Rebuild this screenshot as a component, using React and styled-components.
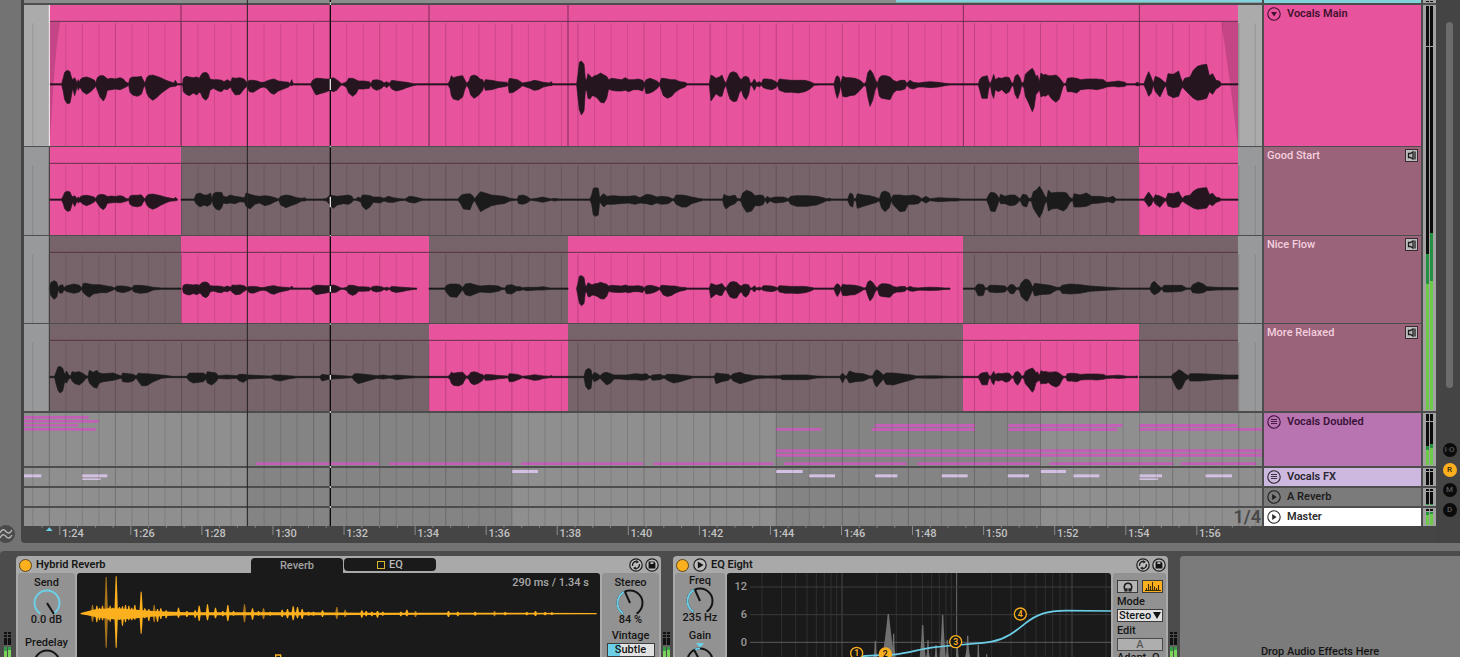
import styled, { createGlobalStyle } from "styled-components";

const PINK = "#e8539e";
const MUTED = "#77646a";
const CYAN = "#6ccfe8";
const AMBER = "#fdb01e";

// Timeline drawings use three units per pixel, samples are [x, up, down]
const LEFT = 72;
const WIDTH = 3714;
const GRID_START = 148;
const BAR = 49.56;

const COMP = [
  [148, 1, 1], [185, 2, 2], [190, 20, 22], [194, 36, 46], [202, 42, 58], [210, 38, 56], [214, 22, 35], [218, 14, 12],
  [224, 20, 34], [228, 12, 20], [231, 4, 6], [235, 14, 18], [238, 6, 10], [242, 16, 12], [248, 20, 22], [260, 22, 30],
  [272, 18, 22], [284, 12, 10], [287, 3, 4], [292, 20, 18], [300, 26, 38], [310, 26, 50], [316, 22, 40], [322, 16, 18],
  [335, 18, 16], [345, 16, 14], [360, 20, 16], [370, 16, 12], [378, 6, 8], [386, 3, 3], [390, 18, 24], [398, 22, 32],
  [412, 22, 36], [424, 24, 30], [430, 12, 12], [435, 3, 3], [440, 20, 26], [446, 26, 38], [458, 28, 48], [470, 24, 40],
  [482, 20, 28], [498, 12, 16], [510, 8, 8], [522, 4, 6], [526, 12, 6], [532, 1, 1], [548, 1, 1], [550, 18, 22],
  [558, 24, 30], [568, 22, 34], [580, 20, 26], [590, 22, 32], [598, 18, 24], [602, 26, 26], [608, 34, 40], [618, 36, 48],
  [625, 30, 38], [630, 16, 18], [640, 14, 12], [655, 14, 20], [665, 12, 22], [672, 8, 14], [682, 14, 16], [692, 8, 8],
  [697, 20, 20], [706, 18, 32], [720, 20, 30], [732, 16, 14], [740, 6, 6], [748, 12, 22], [760, 12, 24], [772, 10, 16],
  [782, 6, 10], [792, 6, 8], [800, 10, 12], [812, 14, 26], [822, 16, 30], [835, 10, 20], [850, 8, 14], [866, 6, 8],
  [870, 1, 1], [875, 14, 4], [880, 1, 1], [932, 1, 1], [938, 12, 14], [948, 18, 32], [960, 18, 28], [975, 16, 24],
  [990, 16, 18], [1000, 20, 22], [1010, 14, 18], [1018, 8, 8], [1024, 1, 1], [1032, 4, 4], [1040, 8, 10], [1046, 18, 26],
  [1058, 18, 36], [1068, 14, 28], [1075, 10, 14], [1090, 10, 14], [1108, 8, 12], [1112, 2, 2], [1118, 12, 12],
  [1130, 14, 18], [1145, 10, 12], [1152, 4, 4], [1160, 8, 10], [1168, 3, 3], [1175, 12, 14], [1188, 10, 20],
  [1205, 8, 16], [1220, 6, 10], [1240, 2, 4], [1250, 1, 1], [1344, 1, 1], [1350, 12, 12], [1354, 26, 34], [1360, 20, 44],
  [1375, 24, 48], [1388, 26, 38], [1394, 14, 16], [1400, 3, 3], [1407, 10, 14], [1412, 24, 32], [1422, 28, 42],
  [1432, 24, 36], [1440, 16, 28], [1448, 14, 18], [1452, 4, 4], [1456, 14, 18], [1475, 12, 16], [1495, 8, 10],
  [1520, 6, 6], [1524, 2, 2], [1528, 18, 26], [1540, 16, 24], [1552, 14, 16], [1568, 4, 4], [1578, 6, 8], [1590, 8, 12],
  [1602, 12, 18], [1615, 10, 16], [1630, 6, 8], [1648, 4, 4], [1654, 8, 4], [1658, 1, 1], [1730, 1, 1], [1734, 30, 40],
  [1738, 66, 76], [1744, 70, 92], [1752, 60, 80], [1756, 16, 20], [1760, 14, 18], [1764, 32, 42], [1770, 26, 44],
  [1776, 20, 34], [1784, 26, 36], [1792, 28, 42], [1802, 34, 54], [1812, 28, 56], [1820, 24, 42], [1826, 14, 14],
  [1835, 18, 18], [1850, 16, 20], [1865, 14, 20], [1876, 20, 18], [1886, 14, 22], [1900, 14, 16], [1915, 16, 16],
  [1928, 12, 20], [1933, 3, 4], [1938, 14, 28], [1950, 18, 26], [1962, 14, 20], [1974, 8, 10], [1978, 2, 2],
  [1984, 18, 16], [1990, 18, 34], [2002, 16, 42], [2015, 14, 36], [2025, 14, 24], [2040, 8, 14], [2055, 6, 8],
  [2062, 2, 2], [2080, 1, 1], [2128, 1, 1], [2133, 28, 50], [2140, 24, 40], [2148, 18, 28], [2158, 22, 36], [2166, 28, 36],
  [2172, 12, 14], [2178, 3, 3], [2184, 20, 26], [2190, 34, 44], [2200, 38, 52], [2210, 34, 50], [2218, 20, 26],
  [2224, 14, 16], [2230, 22, 36], [2238, 24, 46], [2246, 20, 30], [2251, 4, 4], [2256, 4, 4], [2263, 16, 18],
  [2270, 4, 4], [2278, 8, 8], [2284, 3, 3], [2290, 16, 10], [2302, 16, 14], [2316, 14, 16], [2328, 8, 10], [2332, 3, 3],
  [2338, 16, 18], [2355, 14, 24], [2375, 12, 24], [2395, 12, 26], [2415, 12, 22], [2430, 8, 14], [2443, 2, 3],
  [2460, 1, 1], [2502, 1, 1], [2508, 22, 30], [2512, 26, 42], [2518, 20, 24], [2522, 2, 3], [2528, 24, 36],
  [2538, 20, 38], [2550, 20, 34], [2565, 18, 32], [2580, 12, 18], [2592, 2, 4], [2598, 6, 6], [2603, 34, 36],
  [2610, 44, 66], [2618, 34, 48], [2625, 16, 18], [2632, 3, 3], [2638, 20, 36], [2645, 26, 42], [2658, 26, 44],
  [2670, 22, 46], [2680, 12, 26], [2690, 8, 18], [2702, 12, 18], [2715, 12, 14], [2720, 3, 3], [2730, 12, 12],
  [2740, 6, 14], [2755, 4, 8], [2770, 6, 8], [2790, 8, 10], [2815, 6, 8], [2835, 3, 4], [2850, 1, 1], [2935, 2, 2],
  [2940, 16, 20], [2946, 22, 42], [2962, 26, 42], [2966, 10, 14], [2971, 2, 2], [2976, 14, 30], [2981, 30, 42],
  [2986, 14, 16], [2995, 20, 22], [3005, 18, 16], [3018, 22, 28], [3028, 20, 22], [3035, 4, 6], [3040, 4, 4],
  [3045, 24, 30], [3053, 30, 44], [3060, 20, 26], [3065, 3, 3], [3072, 8, 10], [3076, 30, 36], [3086, 40, 56],
  [3097, 48, 82], [3102, 40, 70], [3108, 22, 30], [3112, 28, 26], [3118, 8, 16], [3123, 34, 38], [3130, 28, 34],
  [3136, 30, 36], [3145, 26, 30], [3155, 26, 44], [3168, 28, 54], [3178, 20, 44], [3188, 6, 10], [3192, 2, 2],
  [3198, 3, 3], [3202, 18, 22], [3215, 20, 22], [3230, 18, 26], [3242, 14, 16], [3260, 16, 14], [3275, 16, 14],
  [3290, 16, 16], [3310, 14, 12], [3320, 6, 8], [3340, 8, 6], [3355, 10, 8], [3375, 6, 6], [3380, 1, 1], [3405, 1, 1],
  [3412, 6, 5], [3420, 1, 1], [3432, 2, 2], [3440, 24, 20], [3446, 38, 36], [3454, 20, 26], [3460, 3, 3], [3466, 24, 22],
  [3480, 18, 38], [3492, 8, 12], [3498, 4, 4], [3504, 32, 32], [3520, 30, 40], [3536, 40, 36], [3542, 20, 18],
  [3548, 6, 8], [3554, 18, 16], [3570, 22, 32], [3580, 42, 42], [3592, 54, 48], [3605, 58, 46], [3620, 60, 42],
  [3628, 26, 22], [3638, 32, 30], [3648, 12, 14], [3658, 10, 8], [3664, 2, 2], [3670, 1, 1], [3714, 1, 1],
];

const GOOD_START = [
  [543, 1, 1], [583, 1, 1], [588, 16, 12], [600, 20, 22], [612, 14, 16], [622, 14, 20], [632, 20, 14], [636, 2, 2],
  [640, 18, 18], [648, 22, 28], [658, 22, 32], [665, 22, 24], [670, 10, 10], [680, 8, 12], [690, 14, 10], [705, 10, 12],
  [720, 8, 6], [734, 6, 8], [738, 20, 20], [750, 16, 28], [765, 12, 14], [778, 10, 10], [795, 12, 18], [810, 10, 14],
  [825, 6, 6], [836, 2, 2], [842, 10, 16], [858, 14, 24], [872, 12, 18], [890, 6, 12], [905, 4, 4], [914, 6, 4],
  [920, 1, 1], [968, 1, 1], [980, 4, 4], [990, 14, 16], [1000, 12, 26], [1012, 10, 16], [1030, 12, 12], [1045, 14, 14],
  [1056, 10, 8], [1060, 2, 2], [1068, 2, 2], [1074, 8, 4], [1082, 4, 6], [1087, 14, 20], [1098, 14, 30], [1110, 12, 22],
  [1120, 8, 8], [1140, 8, 10], [1152, 4, 4], [1165, 10, 8], [1180, 6, 8], [1200, 3, 3], [1215, 2, 2], [1228, 10, 8],
  [1245, 8, 10], [1260, 4, 4], [1270, 2, 2], [1290, 1, 1], [1374, 1, 1], [1382, 12, 12], [1390, 16, 28], [1410, 18, 30],
  [1418, 12, 10], [1424, 3, 3], [1436, 18, 26], [1442, 24, 36], [1455, 20, 28], [1475, 14, 18], [1495, 12, 14],
  [1512, 10, 12], [1530, 4, 4], [1545, 2, 2], [1552, 2, 2], [1556, 12, 12], [1568, 14, 14], [1580, 10, 10], [1592, 2, 2],
  [1610, 4, 4], [1628, 8, 8], [1645, 4, 4], [1655, 2, 2], [1662, 4, 4], [1680, 1, 1], [1770, 1, 1], [1775, 14, 14],
  [1780, 34, 46], [1786, 36, 50], [1795, 34, 46], [1799, 6, 6], [1806, 14, 16], [1812, 18, 22], [1820, 10, 14],
  [1840, 12, 14], [1860, 10, 12], [1885, 10, 10], [1905, 12, 14], [1920, 6, 10], [1940, 16, 12], [1955, 14, 16],
  [1970, 8, 10], [1985, 10, 14], [2005, 8, 12], [2017, 3, 3], [2022, 3, 3], [2028, 14, 14], [2045, 14, 22],
  [2060, 12, 22], [2075, 8, 12], [2095, 4, 6], [2110, 2, 2], [2125, 1, 1], [2168, 1, 1], [2172, 16, 18], [2178, 12, 28],
  [2190, 10, 18], [2205, 14, 12], [2212, 3, 3], [2222, 3, 3], [2228, 20, 20], [2240, 28, 38], [2255, 22, 34],
  [2265, 12, 18], [2280, 14, 18], [2290, 12, 14], [2295, 2, 2], [2302, 10, 12], [2310, 4, 4], [2325, 8, 10],
  [2350, 8, 8], [2365, 3, 3], [2372, 10, 14], [2390, 12, 20], [2420, 12, 20], [2450, 10, 16], [2470, 6, 8], [2480, 3, 3],
  [2488, 4, 4], [2495, 1, 1], [2543, 1, 1], [2550, 20, 18], [2558, 16, 22], [2562, 2, 2], [2568, 4, 4], [2572, 18, 26],
  [2590, 14, 20], [2610, 12, 14], [2630, 6, 8], [2638, 3, 3], [2645, 22, 26], [2655, 26, 36], [2668, 20, 24],
  [2674, 3, 3], [2680, 14, 16], [2700, 14, 36], [2715, 12, 34], [2725, 12, 14], [2740, 14, 14], [2755, 10, 12],
  [2765, 3, 3], [2778, 10, 10], [2790, 3, 3], [2815, 6, 6], [2850, 4, 4], [2870, 4, 4], [2885, 2, 2], [2900, 1, 1],
  [2960, 1, 1], [2967, 16, 18], [2972, 22, 34], [2985, 20, 36], [2993, 12, 16], [2997, 1, 1], [3002, 16, 12],
  [3015, 10, 12], [3030, 14, 18], [3045, 14, 16], [3053, 8, 10], [3060, 2, 2], [3068, 16, 18], [3080, 14, 22],
  [3086, 4, 4], [3094, 4, 4], [3100, 24, 26], [3110, 30, 42], [3118, 40, 54], [3126, 28, 40], [3134, 12, 14],
  [3140, 4, 4], [3145, 28, 34], [3155, 20, 28], [3170, 22, 26], [3190, 22, 34], [3200, 20, 26], [3210, 6, 8],
  [3218, 3, 3], [3222, 18, 22], [3240, 14, 22], [3260, 20, 20], [3275, 10, 12], [3300, 10, 10], [3325, 6, 6],
  [3340, 10, 10], [3348, 1, 1], [3418, 1, 1],
];

const NICE_FLOW = [
  [[148, 2, 2], [152, 18, 20], [162, 24, 32], [170, 20, 26], [175, 4, 4], [180, 10, 14], [188, 12, 12], [192, 3, 3],
    [198, 8, 8], [205, 10, 10], [222, 14, 14], [238, 10, 10], [245, 2, 2], [250, 16, 12], [258, 16, 20], [268, 14, 26],
    [280, 12, 16], [300, 12, 12], [320, 8, 12], [335, 6, 6], [344, 2, 2], [350, 8, 8], [368, 8, 12], [385, 6, 8],
    [396, 2, 2], [402, 10, 10], [420, 10, 14], [440, 8, 12], [460, 4, 4], [485, 1, 1], [543, 1, 1]],
  [[1287, 1, 1], [1334, 1, 1], [1340, 10, 12], [1350, 14, 24], [1370, 14, 26], [1380, 12, 14], [1388, 3, 3],
    [1396, 14, 18], [1410, 16, 22], [1425, 12, 16], [1440, 8, 10], [1470, 10, 12], [1495, 8, 8], [1505, 3, 3],
    [1515, 2, 2], [1520, 10, 14], [1535, 12, 16], [1550, 6, 6], [1560, 6, 6], [1568, 3, 3], [1580, 4, 6], [1610, 4, 4],
    [1630, 6, 4], [1650, 2, 2], [1670, 1, 1], [1704, 1, 1]],
  [[2890, 1, 1], [2925, 1, 1], [2930, 10, 12], [2935, 14, 22], [2950, 12, 20], [2955, 3, 3], [2962, 2, 2],
    [2968, 10, 10], [2990, 10, 12], [3015, 8, 10], [3022, 2, 2], [3030, 12, 14], [3040, 12, 16], [3050, 2, 2],
    [3058, 4, 4], [3064, 18, 24], [3075, 28, 34], [3082, 28, 38], [3090, 22, 22], [3098, 4, 4], [3104, 16, 22],
    [3120, 14, 18], [3150, 10, 16], [3170, 4, 4], [3180, 4, 4], [3186, 10, 14], [3210, 14, 16], [3240, 12, 14],
    [3270, 8, 8], [3300, 6, 6], [3350, 3, 3], [3365, 1, 1], [3450, 1, 1], [3455, 16, 12], [3463, 22, 18],
    [3475, 10, 12], [3485, 2, 2], [3492, 10, 10], [3515, 10, 10], [3545, 10, 8], [3560, 2, 2], [3572, 2, 2],
    [3578, 12, 12], [3595, 20, 14], [3610, 14, 12], [3620, 6, 6], [3650, 4, 4], [3714, 3, 3]],
];

const MORE_RELAXED = [
  [[148, 1, 1], [164, 2, 2], [168, 14, 20], [174, 30, 40], [180, 32, 48], [188, 26, 42], [194, 8, 14], [200, 18, 18],
    [206, 6, 6], [212, 3, 3], [216, 16, 12], [225, 14, 20], [238, 16, 24], [250, 10, 14], [258, 4, 4], [264, 2, 2],
    [268, 20, 18], [280, 14, 30], [290, 20, 34], [298, 12, 18], [310, 10, 14], [340, 12, 10], [355, 6, 6], [364, 3, 3],
    [368, 12, 14], [385, 10, 16], [400, 8, 12], [408, 3, 3], [416, 12, 14], [425, 10, 26], [440, 10, 26], [460, 8, 14],
    [485, 6, 4], [505, 4, 2], [515, 1, 1], [560, 1, 1], [568, 12, 12], [580, 12, 18], [610, 12, 14], [618, 6, 6],
    [622, 16, 18], [635, 14, 24], [648, 12, 14], [655, 4, 4], [680, 6, 6], [710, 4, 4], [718, 8, 12], [730, 8, 16],
    [745, 6, 6], [790, 4, 4], [812, 3, 3], [822, 6, 8], [840, 6, 12], [865, 4, 6], [890, 2, 2], [900, 1, 1],
    [960, 1, 1], [966, 8, 12], [980, 6, 8], [1000, 6, 6], [1040, 3, 3], [1056, 2, 2], [1064, 10, 12], [1075, 10, 20],
    [1095, 8, 14], [1130, 4, 4], [1150, 6, 6], [1170, 3, 3], [1190, 6, 8], [1220, 4, 4], [1250, 1, 1], [1287, 1, 1]],
  [[1704, 1, 1], [1752, 1, 1], [1757, 20, 28], [1765, 26, 38], [1773, 22, 34], [1777, 4, 4], [1783, 14, 14],
    [1792, 10, 10], [1800, 4, 4], [1810, 12, 14], [1820, 14, 24], [1832, 10, 18], [1842, 6, 6], [1860, 6, 6],
    [1880, 6, 8], [1905, 10, 8], [1925, 8, 10], [1940, 10, 8], [1947, 3, 3], [1953, 3, 3], [1957, 6, 10], [1980, 8, 8],
    [1992, 3, 3], [2002, 8, 10], [2020, 8, 18], [2040, 6, 14], [2080, 2, 2], [2100, 1, 1], [2143, 1, 1], [2148, 12, 20],
    [2165, 10, 14], [2185, 8, 10], [2192, 3, 3], [2200, 10, 12], [2220, 14, 20], [2235, 8, 16], [2265, 4, 6],
    [2280, 4, 4], [2300, 3, 3], [2340, 4, 4], [2348, 6, 8], [2370, 6, 8], [2420, 6, 8], [2450, 3, 3], [2480, 1, 1],
    [2520, 1, 1], [2528, 12, 18], [2534, 4, 4], [2540, 3, 3], [2548, 18, 18], [2565, 12, 14], [2590, 10, 12],
    [2610, 3, 3], [2618, 4, 4], [2624, 16, 22], [2630, 22, 30], [2640, 16, 18], [2650, 6, 6], [2658, 12, 22],
    [2680, 12, 24], [2700, 10, 18], [2735, 6, 8], [2750, 3, 3], [2800, 4, 4], [2850, 2, 2], [2890, 1, 1]],
  [[3418, 1, 1], [3514, 1, 1], [3520, 10, 14], [3530, 16, 34], [3536, 22, 38], [3545, 18, 34], [3555, 10, 12],
    [3565, 4, 4], [3570, 10, 12], [3600, 10, 12], [3640, 8, 8], [3680, 6, 6], [3714, 6, 6]],
];

const comp = (from, to) => COMP.filter(([x]) => x >= from && x <= to);

const wavePath = (samples, center, gain = 1) => {
  const size = (value) => Math.max(2, value * gain);
  const top = samples.map(([x, up]) => `${x},${center - size(up)}`);
  const bottom = samples.map(([x, , down]) => `${x},${center + size(down)}`).reverse();
  return `M${[...top, ...bottom].join("L")}Z`;
};

const TAKES = [
  {
    name: "Vocals Main",
    top: 15,
    height: 141,
    center: 253,
    line: 64,
    empty: "#ababab",
    clips: [[543, 1], [1287, 1], [1704, 1], [2890, 1], [3418, 1], [3714, 1]],
    waves: [{ samples: COMP, on: true }],
    main: true,
  },
  {
    name: "Good Start",
    top: 441,
    height: 88,
    center: 599,
    line: 490,
    empty: "#98999b",
    clips: [[543, 1], [3418, 0], [3714, 1]],
    waves: [
      { samples: comp(148, 543), gain: 0.6, on: true },
      { samples: GOOD_START },
      { samples: comp(3418, 3714), gain: 0.6, on: true },
    ],
  },
  {
    name: "Nice Flow",
    top: 708,
    height: 87,
    center: 866,
    line: 757,
    empty: "#98999b",
    clips: [[543, 0], [1287, 1], [1704, 0], [2890, 1], [3714, 0]],
    waves: [
      { samples: NICE_FLOW[0] },
      { samples: comp(543, 1287), gain: 0.56, on: true },
      { samples: NICE_FLOW[1] },
      { samples: comp(1704, 2890), gain: 0.56, on: true },
      { samples: NICE_FLOW[2] },
    ],
  },
  {
    name: "More Relaxed",
    top: 972,
    height: 87,
    center: 1131,
    line: 1021,
    empty: "#98999b",
    clips: [[1287, 0], [1704, 1], [2890, 0], [3418, 1], [3714, 0]],
    waves: [
      { samples: MORE_RELAXED[0] },
      { samples: [[1287, 1, 1], ...comp(1287, 1704), [1704, 1, 1]], gain: 0.56, on: true },
      { samples: MORE_RELAXED[1] },
      { samples: [[2890, 1, 1], ...comp(2890, 3418)], gain: 0.56, on: true },
      { samples: MORE_RELAXED[2] },
    ],
  },
];

// [x, end, y, height]
const DOUBLED_NOTES = [
  [72, 266, 1248, 8], [72, 295, 1260, 8], [72, 235, 1272, 7], [72, 288, 1284, 8],
  [768, 1137, 1387, 8], [1167, 1533, 1387, 8], [1563, 1930, 1387, 8], [1960, 2320, 1387, 8],
  [2352, 2720, 1387, 8], [2752, 3120, 1387, 8], [3148, 3520, 1387, 8], [3542, 3768, 1387, 8],
  [2328, 2464, 1284, 8], [2625, 2925, 1272, 9], [2615, 2925, 1284, 9], [3025, 3367, 1272, 9],
  [3025, 3352, 1284, 9], [3418, 3712, 1272, 9], [3418, 3786, 1284, 8],
  [2328, 3786, 1348, 9], [2328, 3786, 1361, 9],
];

const FX_NOTES = [
  [72, 124, 1423, 9], [246, 322, 1423, 9], [246, 302, 1435, 5], [1536, 1614, 1410, 9],
  [2328, 2408, 1410, 9], [2427, 2505, 1423, 9], [2625, 2692, 1423, 9], [2825, 2903, 1423, 9],
  [3023, 3087, 1423, 9], [3122, 3198, 1410, 9], [3220, 3298, 1423, 9], [3418, 3486, 1423, 9],
  [3418, 3474, 1435, 5], [3616, 3696, 1423, 9],
];

const LOWER_LANES = [
  { top: 1239, height: 53, notes: DOUBLED_NOTES, color: "#c45fb8" },
  { top: 1404, height: 18, notes: FX_NOTES, color: "#d3c0e2" },
  { top: 1464, height: 18, notes: [] },
  { top: 1524, height: 18, notes: [], grid: "1/4" },
];

const LOWER_TRACKS = [
  { name: "Vocals Doubled", icon: "list", color: "#b874b0", text: "#3a1238", height: 53 },
  { name: "Vocals FX", icon: "list", color: "#cdb9df", text: "#2b2530", height: 18 },
  { name: "A Reverb", icon: "play", color: "#7b7b7b", text: "#1e1e1e", height: 18 },
  { name: "Master", icon: "play", color: "#ffffff", text: "#2c2c2c", height: 18 },
];

const TIMES = Array.from({ length: 17 }, (_, i) => `1:${24 + i * 2}`);

// [x, up, down, dim]
const IMPULSES = [
  [277, 26, 24, 1], [290, 24, 26], [298, 18, 20], [307, 24, 20], [318, 110, 102, 1], [324, 18, 20], [330, 24, 24],
  [338, 18, 14], [348, 112, 102], [358, 20, 18], [367, 22, 36], [376, 26, 26], [386, 24, 20], [395, 18, 20],
  [404, 26, 18], [423, 66, 60], [434, 16, 14], [446, 14, 22], [462, 26, 26, 1], [472, 14, 24], [482, 16, 16],
  [498, 10, 14], [535, 18, 12], [560, 8, 10], [585, 10, 12], [597, 24, 22], [622, 28, 20], [646, 18, 14],
  [668, 8, 8], [683, 26, 22], [700, 8, 6], [733, 28, 26, 1], [757, 16, 18], [775, 8, 6], [790, 16, 16, 1],
  [810, 6, 6], [846, 12, 10], [862, 14, 14], [879, 22, 20], [892, 20, 14], [906, 14, 16], [925, 6, 6], [940, 6, 6],
  [967, 10, 10], [1010, 20, 16, 1], [1035, 12, 10, 1], [1085, 10, 12], [1098, 8, 8], [1115, 6, 8], [1132, 8, 12],
  [1148, 6, 6], [1202, 6, 8], [1220, 12, 8], [1246, 8, 10, 1], [1345, 8, 10], [1373, 6, 8], [1425, 6, 6],
  [1483, 8, 8, 1], [1515, 5, 5], [1580, 5, 5], [1606, 8, 7], [1635, 5, 5], [1655, 4, 4],
];

const EQ_LINES = [
  96, 155, 197, 231, 259, 283, 303, 320, 336, 440, 499, 544, 577, 605, 628, 648, 664, 680, 785, 843, 885, 918, 946,
  968, 990, 1008, 1026, 1128,
];

// [x, tip, half width]
const PEAKS = [
  [436, 288, 8], [475, 207, 18], [491, 266, 6], [578, 240, 9], [594, 286, 7], [618, 300, 8], [638, 210, 9],
  [652, 285, 6], [682, 298, 7], [713, 272, 8], [745, 300, 6], [770, 328, 5],
];

const EQ_NODES = [
  { n: 1, x: 380, y: 325 },
  { n: 2, x: 466, y: 327, filled: true },
  { n: 3, x: 677, y: 290 },
  { n: 4, x: 871, y: 207 },
];

function GridLines({ top, bottom }) {
  return Array.from({ length: 75 }, (_, i) => {
    const x = GRID_START + BAR * (i - 1);
    return (
      <line
        key={i}
        x1={x}
        x2={x}
        y1={top}
        y2={bottom}
        stroke="#200010"
        strokeWidth="3"
        strokeOpacity={i % 4 === 1 ? 0.22 : 0.13}
      />
    );
  });
}

function TakeLane({ take }) {
  const { top, height, center, line, clips, waves, main, empty } = take;
  const bottom = top + height * 3;
  return (
    <Lane $height={height}>
      <Clips>
        <Clip $span={76} $color={empty} />
        {clips.map(([end, on], i) => (
          <Clip key={end} $span={end - (i ? clips[i - 1][0] : 148)} $color={on ? PINK : MUTED} />
        ))}
        <Clip $span={72} $color={empty} />
      </Clips>
      <Drawing viewBox={`${LEFT} ${top} ${WIDTH} ${height * 3}`} preserveAspectRatio="none">
        {main && (
          <g fill="#b9417f" fillOpacity="0.75">
            <path d="M149 66H181Q165 150 156 330L149 438Z" />
            <path d="M3664 66H3714V438Q3690 240 3664 66Z" />
          </g>
        )}
        <GridLines top={line + 6} bottom={bottom} />
        {main && (
          <g stroke="#57203d" strokeWidth="3" strokeOpacity="0.75">
            {clips.slice(0, -1).map(([x]) => (
              <line key={x} x1={x} x2={x} y1={top} y2={bottom} />
            ))}
          </g>
        )}
        <line x1="148" x2="3714" y1={line} y2={line} stroke="#4c2c3c" strokeWidth="3" strokeOpacity="0.85" />
        {waves.map(({ samples, gain, on }) => (
          <path
            key={samples[0][0]}
            d={wavePath(samples, center, gain)}
            fill={on ? "#24151f" : "#1b1b1c"}
            stroke={on ? "#24151f" : "#1b1b1c"}
            strokeWidth="2"
            strokeLinejoin="round"
          />
        ))}
        <line x1="148" x2="148" y1={top} y2={bottom} stroke={main ? "#ffffff" : "#3a3a3a"} strokeWidth="3" />
      </Drawing>
    </Lane>
  );
}

function LowerLane({ lane }) {
  const { top, height, notes, color, grid } = lane;
  return (
    <Lane $height={height}>
      <Drawing viewBox={`${LEFT} ${top} ${WIDTH} ${height * 3}`} preserveAspectRatio="none">
        <rect x={LEFT} y={top} width={WIDTH} height={height * 3} fill="#8f8f8f" />
        <rect x="742" y={top} width="793" height={height * 3} fill="#848484" />
        <rect x="2328" y={top} width="793" height={height * 3} fill="#848484" />
        {notes.map(([x, end, y, h]) => (
          <rect key={`${x}-${y}`} x={x} y={y} width={end - x} height={h} fill={color} />
        ))}
        <GridLines top={top} bottom={top + height * 3} />
      </Drawing>
      {grid && <GridSize>{grid}</GridSize>}
    </Lane>
  );
}

function TrackIcon({ kind }) {
  return (
    <svg width="14" height="14" viewBox="0 0 14 14">
      <circle cx="7" cy="7" r="6.2" fill="none" stroke="currentColor" strokeWidth="1.1" />
      {kind === "fold" && <path d="M4 5h6L7 9.4Z" fill="currentColor" />}
      {kind === "play" && <path d="M5.2 4v6l4.4-3Z" fill="currentColor" />}
      {kind === "list" && <path d="M4 4.5h6M4 6.5h6M4 8.5h6" stroke="currentColor" strokeWidth="0.9" />}
    </svg>
  );
}

function Meter({ height, levels, peak }) {
  return (
    <MeterBox>
      <svg width="13" height={height}>
        {levels.map(([hot, level], i) => {
          const x = i ? 7 : 3;
          return (
            <g key={x}>
              <rect x={x} y="1" width="3" height={Math.max(height - 2, 1)} fill="#0c0c0c" />
              <rect x={x} y={hot} width="3" height={Math.max(height - 1 - hot, 0)} fill="#23913f" />
              <rect x={x} y={level} width="3" height={Math.max(height - 1 - level, 0)} fill="#6cc94a" />
            </g>
          );
        })}
        <rect x="2" y={peak} width="9" height="1" fill="#a8a8a8" />
      </svg>
    </MeterBox>
  );
}

const point = (angle, radius) => {
  const rad = (angle * Math.PI) / 180;
  return [15 + Math.sin(rad) * radius, 15 - Math.cos(rad) * radius].map((n) => n.toFixed(2)).join(" ");
};

const arc = (from, to) => `M${point(from, 12.5)}A12.5 12.5 0 ${to - from > 180 ? 1 : 0} 1 ${point(to, 12.5)}`;

function Knob({ label, value, angle, full, bipolar, from = -148 }) {
  return (
    <KnobLabel $tall={!bipolar && !full}>
      {label}
      {bipolar && (
        <svg width="8" height="5" viewBox="0 0 8 5">
          <path d="M0 0H8L4 5Z" fill={CYAN} />
        </svg>
      )}
      <Dial>
        <svg width="30" height="28" viewBox="0 0 30 28" fill="none" strokeWidth="2">
          {!full && <path d={arc(-148, 148)} stroke="#141414" />}
          <path d={arc(Math.min(from, angle), Math.max(from, angle))} stroke={CYAN} />
          <path d={`M15 15L${point(angle, 13)}`} stroke="#141414" />
        </svg>
        <DialInput type="range" min="-148" max="148" defaultValue={angle} />
      </Dial>
      {value && <KnobValue>{value}</KnobValue>}
    </KnobLabel>
  );
}

function HeaderIcons() {
  return (
    <IconGroup>
      <RoundButton aria-label="Hot-swap preset">
        <svg width="14" height="14" viewBox="0 0 14 14" fill="none" stroke="#1b1b1b">
          <circle cx="7" cy="7" r="6.2" fill="#bdbdbd" strokeWidth="1.2" />
          <path d="M3.6 7.8A3.5 3.5 0 0 1 7.6 3.6M10.4 6.2A3.5 3.5 0 0 1 6.4 10.4" strokeWidth="1.4" />
          <path d="M7.2 2L10 4L7.2 5.6ZM6.8 12L4 10L6.8 8.4Z" fill="#1b1b1b" stroke="none" />
        </svg>
      </RoundButton>
      <RoundButton aria-label="Save preset">
        <svg width="14" height="14" viewBox="0 0 14 14">
          <circle cx="7" cy="7" r="6.2" fill="#bdbdbd" stroke="#1b1b1b" strokeWidth="1.2" />
          <path d="M3.6 3.6H9L10.4 5V10.4H3.6Z" fill="#141414" />
          <path d="M5.4 4.2H8.4V6H5.4Z" fill="#bdbdbd" />
        </svg>
      </RoundButton>
    </IconGroup>
  );
}

function SideMeter() {
  return (
    <SideStrip>
      <svg width="8" height="26">
        <path d="M0 1H3M4 1H7M0 4H3M4 4H7" stroke="#111" strokeWidth="2" />
        <path d="M0 6H3V13H0ZM4 6H7V13H4Z" fill="#111" />
        <path d="M0 14H7" stroke="#777" />
        <path d="M0 15H3V26H0ZM4 15H7V26H4Z" fill="#35a045" />
        <path d="M0 19H3V26H0ZM4 18H7V26H4Z" fill="#7bd35a" />
      </svg>
    </SideStrip>
  );
}

function ReverbDisplay() {
  return (
    <Display $width={523}>
      <Drawing viewBox="231 84 1569 252">
        {IMPULSES.map(([x, up, down, dim]) => (
          <path
            key={x}
            d={`M${x - 5} 206L${x - 1} ${206 - up}H${x + 2}L${x + 6} 206L${x + 2} ${206 + down}H${x - 1}Z`}
            fill={dim ? "#a8741c" : AMBER}
          />
        ))}
        <path
          d="M242 204L262 199L290 192L350 190L410 194L470 199L560 202L900 202L1100 203L1790 204V208L1100 210L900 211L560 211L470 214L410 220L350 224L290 217L262 211L242 208Z"
          fill={AMBER}
        />
        <path d="M827 336V330H842V336" fill="none" stroke={AMBER} strokeWidth="4" />
      </Drawing>
      <DecayTime>290 ms / 1.34 s</DecayTime>
    </Display>
  );
}

function EqDisplay() {
  return (
    <Display $width={384}>
      <Drawing viewBox="-9 84 1152 252">
        {EQ_LINES.map((x) => (
          <line
            key={x}
            x1={x}
            x2={x}
            y1="84"
            y2="336"
            stroke={x === 680 ? "#6a6a6a" : x === 336 || x === 1026 ? "#464646" : "#2f2f2f"}
            strokeWidth="3"
          />
        ))}
        <path d="M60 126H1143M60 209H1143" stroke="#3a3a3a" strokeWidth="3" />
        <path d="M60 292H1143" stroke="#5c5c5c" strokeWidth="3" />
        {PEAKS.map(([x, tip, half]) => (
          <path
            key={x}
            d={`M${x - half} 336Q${x - half / 3} ${tip + 50} ${x - 2} ${tip}H${x + 2}Q${x + half / 3} ${tip + 50} ${x + half} 336Z`}
            fill="#707070"
          />
        ))}
        <path
          d="M395 334C430 329 460 331 490 329C540 323 570 312 610 307C680 298 740 298 785 290C830 282 860 256 885 236C920 208 950 197 1010 197L1143 198"
          fill="none"
          stroke={CYAN}
          strokeWidth="5"
        />
        {EQ_NODES.map(({ n, x, y, filled }) => (
          <g key={n}>
            <circle cx={x} cy={y} r="18" fill={filled ? AMBER : "#1a1a1a"} stroke={AMBER} strokeWidth="4" />
            <NodeNumber x={x} y={y + 9} textAnchor="middle" fill={filled ? "#1a1a1a" : AMBER}>
              {n}
            </NodeNumber>
          </g>
        ))}
      </Drawing>
      <Scale>
        <span>12</span>
        <span>6</span>
        <span>0</span>
      </Scale>
    </Display>
  );
}

export default function App() {
  return (
    <Page>
      <GlobalStyle />
      <Arrangement>
        <Gutter>
          <GutterButton aria-label="Automation">
            <svg width="18" height="18" viewBox="0 0 18 18" fill="none" stroke="#b5b5b5" strokeWidth="1.4">
              <path d="M3 8C5 4 7 4 9 6.5S13 8.5 15 5M3 13C5 9 7 9 9 11.5S13 13.5 15 10" />
            </svg>
          </GutterButton>
        </Gutter>
        <Timeline>
          <Tracks>
            <Overview viewBox="72 0 3714 9" preserveAspectRatio="none">
              <rect x="72" width="3714" height="9" fill="#8b8c8c" />
              <rect x="2688" width="1098" height="7" fill="#80d3da" />
            </Overview>
            <TopHeader />
            <Meter height={3} levels={[[3, 3], [3, 3]]} peak={3} />

            <Stack>
              {TAKES.map((take) => (
                <TakeLane key={take.name} take={take} />
              ))}
            </Stack>
            <Stack>
              {TAKES.map(({ name, height, main }) =>
                main ? (
                  <Header key={name} $height={height} $color={PINK} $text="#40122c">
                    <IconButton aria-label="Fold take lanes">
                      <TrackIcon kind="fold" />
                    </IconButton>
                    <TrackName>{name}</TrackName>
                  </Header>
                ) : (
                  <Header key={name} $height={height} $color="#9a637a" $text="#f3cfde">
                    <TakeName>{name}</TakeName>
                    <AuditionButton aria-label={`Audition ${name}`}>
                      <svg width="11" height="11" viewBox="0 0 11 11" fill="none" stroke="#1c1c1c" strokeWidth="1.3">
                        <path d="M2.5 3.5H4.5L7 2V9L4.5 7.5H2.5Z" />
                        <path d="M9 1.5V9.5" />
                      </svg>
                    </AuditionButton>
                  </Header>
                )
              )}
            </Stack>
            <Meter height={406} levels={[[249, 279], [228, 276]]} peak={41} />

            {LOWER_TRACKS.map((track, i) => (
              <Row key={track.name}>
                <LowerLane lane={LOWER_LANES[i]} />
                <Header $height={track.height} $color={track.color} $text={track.text}>
                  <IconButton aria-label={`Unfold ${track.name}`}>
                    <TrackIcon kind={track.icon} />
                  </IconButton>
                  <TrackName>{track.name}</TrackName>
                </Header>
                <Meter
                  height={track.height}
                  levels={[[[33, 37], [31, 35]], [[17, 17], [17, 17]], [[16, 17], [16, 17]], [[4, 7], [4, 6]]][i]}
                  peak={i ? 3 : 8}
                />
              </Row>
            ))}

            <Playheads viewBox="72 0 3714 1578" preserveAspectRatio="none">
              <path d="M742 0V1578" stroke="#262224" strokeWidth="3" />
              <path d="M991 0V1578" stroke="#0c0c0c" strokeWidth="4" />
              <path d="M991 237V270M991 590V622M991 858V876M991 1125V1139" stroke="#e6dfe2" strokeWidth="4" />
              <path
                d="M991 6V15M991 437V442M991 705V709M991 970V974M991 1233V1239M991 1398V1404M991 1458V1464M991 1518V1524"
                stroke="#c8c8c8"
                strokeWidth="4"
              />
            </Playheads>
          </Tracks>
          <Ruler>
            <RulerTicks viewBox="72 0 3714 51" preserveAspectRatio="none">
              {Array.from({ length: 69 }, (_, i) => {
                const x = 126 + i * 53.3;
                return (
                  <path key={i} d={`M${x} 0V${i % 4 === 1 ? 27 : 5}`} stroke="#8c8c8c" strokeWidth="3" />
                );
              })}
              <path d="M138 15L148 4L158 15Z" fill={CYAN} />
            </RulerTicks>
            <Times>
              {TIMES.map((time) => (
                <Time key={time}>{time}</Time>
              ))}
            </Times>
          </Ruler>
        </Timeline>
        <Rail>
          <ScrollThumb />
          <RailButtons>
            <RailButton>I·O</RailButton>
            <RailButton $on>R</RailButton>
            <RailButton>M</RailButton>
            <RailButton>D</RailButton>
          </RailButtons>
        </Rail>
      </Arrangement>

      <Rack>
        <SideMeter />
        <Device>
          <DeviceHeader>
            <DeviceTitle $width={232}>
              <PowerButton aria-label="Hybrid Reverb on" />
              Hybrid Reverb
            </DeviceTitle>
            <Tab $active>Reverb</Tab>
            <Tab>
              <TabSquare />
              EQ
            </Tab>
            <HeaderIcons />
          </DeviceHeader>
          <DeviceBody>
            <Panel $width={57}>
              <Knob label="Send" value="0.0 dB" angle={148} full />
              <Knob label="Predelay" angle={148} from={148} />
            </Panel>
            <ReverbDisplay />
            <Panel $width={57}>
              <Knob label="Stereo" value="84 %" angle={-24} />
              <PanelLabel>Vintage</PanelLabel>
              <VintageButton>Subtle</VintageButton>
            </Panel>
          </DeviceBody>
        </Device>
        <SideMeter />
        <Device>
          <DeviceHeader>
            <DeviceTitle>
              <PowerButton aria-label="EQ Eight on" />
              <RoundButton aria-label="Expand display">
                <svg width="14" height="14" viewBox="0 0 14 14">
                  <circle cx="7" cy="7" r="6.2" fill="#bdbdbd" stroke="#1b1b1b" strokeWidth="1.2" />
                  <path d="M4.8 3.5V10.5L10.5 7Z" fill="#141414" />
                </svg>
              </RoundButton>
              EQ Eight
            </DeviceTitle>
            <HeaderIcons />
          </DeviceHeader>
          <DeviceBody>
            <Panel $width={50} $tight>
              <Knob label="Freq" value="235 Hz" angle={-24} />
              <Knob label="Gain" angle={-28} from={0} bipolar />
            </Panel>
            <EqDisplay />
            <EqOptions>
              <ButtonPair>
                <SmallButton aria-label="Audition">
                  <svg width="12" height="10" viewBox="0 0 12 10" fill="none" stroke="#1c1c1c" strokeWidth="1.5">
                    <path d="M4.2 8.5C1 6.5 1.8 1.2 6 1.2S11 6.5 7.8 8.5M2.4 8.8H4.8V6.2M9.6 8.8H7.2V6.2" />
                  </svg>
                </SmallButton>
                <SmallButton $on aria-label="Spectrum">
                  <svg width="16" height="9" viewBox="0 0 16 9" stroke="#3a2a08" strokeWidth="1.1">
                    <path d="M1.5 9V6M3.5 9V2M5.5 9V4M7.5 9V0M9.5 9V4.5M11.5 9V6M13.5 9V3M0 8.5H16" />
                  </svg>
                </SmallButton>
              </ButtonPair>
              <FieldLabel htmlFor="eq-mode">Mode</FieldLabel>
              <SelectWrap>
                <Select id="eq-mode" defaultValue="Stereo">
                  <option>Stereo</option>
                  <option>L/R</option>
                  <option>M/S</option>
                </Select>
                <SelectArrow width="8" height="7" viewBox="0 0 8 7">
                  <path d="M0 0H8L4 7Z" fill="#141414" />
                </SelectArrow>
              </SelectWrap>
              <FieldLabel htmlFor="eq-edit">Edit</FieldLabel>
              <EditButton id="eq-edit">A</EditButton>
              <FieldLabel as="span">Adapt. Q</FieldLabel>
            </EqOptions>
          </DeviceBody>
        </Device>
        <SideMeter />
        <DropArea>Drop Audio Effects Here</DropArea>
      </Rack>
    </Page>
  );
}

const GlobalStyle = createGlobalStyle`
  * {
    box-sizing: border-box;
  }

  body {
    margin: 0;
    background: #737373;
    font: 500 11px/14px Roboto, "Liberation Sans", sans-serif;
    color: #161616;
  }

  button,
  select {
    font: inherit;
    color: inherit;
    border: 0;
    padding: 0;
    margin: 0;
    background: none;
  }
`;

const Page = styled.main`
  display: flex;
  flex-direction: column;
  gap: 8px;
  height: 100vh;
  overflow: hidden;
  background: #737373;
`;

const Arrangement = styled.section`
  display: flex;
  flex: none;
`;

const Gutter = styled.div`
  display: flex;
  align-items: flex-end;
  width: 21px;
  overflow: hidden;
`;

const GutterButton = styled.button`
  display: flex;
  width: 18px;
  height: 18px;
  margin-left: -3px;
  border-radius: 50%;
  background: #4a4a4a;
`;

const Timeline = styled.div`
  display: flex;
  flex: 1;
  flex-direction: column;
  min-width: 0;
  padding-left: 3px;
  border-bottom-left-radius: 4px;
  background: #454545;
`;

const Tracks = styled.div`
  position: relative;
  display: grid;
  grid-template-columns: minmax(0, 1fr) 157px 13px;
  gap: 2px;
  background: #4d4d4d;
`;

const Row = styled.div`
  display: contents;
`;

const Stack = styled.div`
  display: flex;
  flex-direction: column;
  gap: 1px;
  min-width: 0;
`;

const Lane = styled.div`
  display: grid;
  height: ${({ $height }) => $height}px;
  overflow: hidden;

  > * {
    grid-area: 1 / 1;
  }
`;

const Clips = styled.div`
  display: flex;
`;

const Clip = styled.div`
  flex: ${({ $span }) => $span} 0 0;
  background: ${({ $color }) => $color};
`;

const Drawing = styled.svg`
  display: block;
  width: 100%;
  height: 100%;
  min-height: 0;
`;

const Overview = styled(Drawing)`
  height: 3px;
`;

const Playheads = styled.svg`
  position: absolute;
  top: 0;
  left: 0;
  width: calc(100% - 174px);
  height: 100%;
  pointer-events: none;
`;

const GridSize = styled.span`
  justify-self: end;
  font-size: 18px;
  font-weight: 600;
  line-height: 18px;
  padding-right: 1px;
  color: #484848;
`;

const TopHeader = styled.div`
  height: 3px;
  background: #80d3da;
`;

const Header = styled.div`
  display: flex;
  align-items: flex-start;
  gap: 6px;
  height: ${({ $height }) => $height}px;
  padding: 2px 3px;
  background: ${({ $color }) => $color};
  color: ${({ $text }) => $text};
`;

const IconButton = styled.button`
  display: flex;
`;

const TrackName = styled.span`
  font-weight: 600;
`;

const TakeName = styled.span`
  flex: 1;
`;

const AuditionButton = styled.button`
  display: flex;
  border: 1px solid #3c2a33;
  background: #bcbcbc;
`;

const MeterBox = styled.div`
  background: #a2a2a2;

  svg {
    display: block;
  }
`;

const Ruler = styled.div`
  display: grid;
  height: 17px;

  > * {
    grid-area: 1 / 1;
  }
`;

const RulerTicks = styled.svg`
  width: calc(100% - 174px);
  height: 17px;
`;

const Times = styled.div`
  display: flex;
  padding: 0 174px 0 38px;
  color: #c2c2c2;
`;

const Time = styled.span`
  flex: 1;
  line-height: 15px;

  &:last-child {
    flex: 0 0 63px;
  }
`;

const Rail = styled.div`
  display: flex;
  flex-direction: column;
  align-items: center;
  justify-content: space-between;
  width: 24px;
  padding: 22px 0 26px;
  background: #444444;
`;

const ScrollThumb = styled.div`
  width: 7px;
  height: 366px;
  margin-left: 3px;
  border-radius: 4px;
  background: #6c6c6c;
`;

const RailButtons = styled.div`
  display: flex;
  flex-direction: column;
  gap: 6px;
  margin-left: 3px;
`;

const RailButton = styled.button`
  width: 14px;
  height: 14px;
  border-radius: 50%;
  background: ${({ $on }) => ($on ? AMBER : "#0b0b0b")};
  color: ${({ $on }) => ($on ? "#2c1f06" : "#5a5a5a")};
  font-size: 8px;
  line-height: 14px;
`;

const Rack = styled.section`
  display: flex;
  flex: 1;
  min-height: 0;
  padding-top: 5px;
  border-top-left-radius: 4px;
  background: #4c4c4c;
`;

const SideStrip = styled.div`
  display: flex;
  flex: none;
  justify-content: center;
  width: 12px;
  padding-top: 76px;

  &:first-child {
    width: 16px;
  }
`;

const Device = styled.article`
  display: flex;
  flex: none;
  flex-direction: column;
  padding: 0 2px;
  border-radius: 4px 4px 0 0;
  background: #a9a9a9;
`;

const DeviceHeader = styled.header`
  display: flex;
  flex: none;
  align-items: flex-start;
  height: 17px;
  padding-top: 2px;
`;

const DeviceTitle = styled.h2`
  display: flex;
  align-items: center;
  gap: 4px;
  width: ${({ $width }) => ($width ? `${$width}px` : "auto")};
  margin: 0;
  padding-left: 1px;
  font-size: 11px;
  font-weight: 600;
`;

const PowerButton = styled.button`
  width: 13px;
  height: 13px;
  border: 1px solid #59451a;
  border-radius: 50%;
  background: ${AMBER};
`;

const RoundButton = styled.button`
  display: flex;
`;

const IconGroup = styled.div`
  display: flex;
  gap: 2px;
  margin-left: auto;
`;

const Tab = styled.button`
  display: flex;
  align-items: center;
  justify-content: center;
  gap: 4px;
  width: 92px;
  height: ${({ $active }) => ($active ? 15 : 13)}px;
  margin-left: 1px;
  border-radius: ${({ $active }) => ($active ? "4px 4px 0 0" : "4px")};
  background: #1a1a1a;
  color: ${({ $active }) => ($active ? "#a3a3a3" : "#b9b9b9")};
`;

const TabSquare = styled.span`
  width: 8px;
  height: 8px;
  border: 1px solid #d8b62a;
`;

const DeviceBody = styled.div`
  display: flex;
  flex: 1;
  gap: 2px;
`;

const Panel = styled.div`
  display: flex;
  flex-direction: column;
  align-items: center;
  width: ${({ $width }) => $width}px;
  padding-top: ${({ $tight }) => ($tight ? 1 : 3)}px;
  border-radius: 3px 3px 0 0;
  background: #929292;
`;

const KnobLabel = styled.label`
  display: flex;
  flex-direction: column;
  align-items: center;
  height: ${({ $tall }) => ($tall ? 55 : 60)}px;
`;

const Dial = styled.span`
  display: grid;
  height: 24px;
  margin-top: -2px;

  > * {
    grid-area: 1 / 1;
  }
`;

const DialInput = styled.input`
  width: 30px;
  height: 28px;
  margin: 0;
  opacity: 0;
`;

const KnobValue = styled.span`
  margin-top: 1px;
`;

const PanelLabel = styled.span`
  margin-top: -2px;
`;

const VintageButton = styled.button`
  width: 48px;
  height: 14px;
  border: 1px solid #3c3c3c;
  background: linear-gradient(90deg, ${CYAN} 12px, #e2e2e2 12px);
  line-height: 12px;
`;

const Display = styled.div`
  display: grid;
  grid-template-rows: 84px;
  width: ${({ $width }) => $width}px;
  border-radius: 3px 3px 0 0;
  background: #1a1a1a;

  > * {
    grid-area: 1 / 1;
  }
`;

const DecayTime = styled.span`
  justify-self: end;
  padding: 3px 11px;
  color: #a9a9a9;
`;

const NodeNumber = styled.text`
  font-size: 26px;
  font-weight: 600;
`;

const Scale = styled.div`
  display: flex;
  flex-direction: column;
  gap: 14px;
  width: 20px;
  padding-top: 7px;
  text-align: right;
  color: #9a9a9a;
`;

const EqOptions = styled.div`
  display: flex;
  flex-direction: column;
  width: 53px;
  padding: 7px 3px 0 4px;
  border-radius: 3px 3px 0 0;
  background: #929292;
`;

const ButtonPair = styled.div`
  display: flex;
  justify-content: space-between;
  margin-bottom: 2px;
`;

const SmallButton = styled.button`
  display: flex;
  align-items: center;
  justify-content: center;
  width: 21px;
  height: 13px;
  border: 1px solid #3c3c3c;
  background: ${({ $on }) => ($on ? AMBER : "#b5b5b5")};
`;

const FieldLabel = styled.label`
  line-height: 14px;
`;

const SelectWrap = styled.div`
  display: grid;
  margin-bottom: 2px;

  > * {
    grid-area: 1 / 1;
  }
`;

const Select = styled.select`
  appearance: none;
  height: 13px;
  padding-left: 1px;
  border: 1px solid #3c3c3c;
  background: #e2e2e2;
  line-height: 11px;
`;

const SelectArrow = styled.svg`
  justify-self: end;
  align-self: center;
  margin-right: 2px;
  pointer-events: none;
`;

const EditButton = styled.button`
  height: 13px;
  border: 1px solid #4a4a4a;
  background: #aeaeae;
  color: #5a5a5a;
  line-height: 11px;
`;

const DropArea = styled.div`
  display: flex;
  flex: 1;
  justify-content: center;
  padding-top: 89px;
  border-radius: 4px 0 0 0;
  background: #7b7b7b;
  white-space: nowrap;
`;
